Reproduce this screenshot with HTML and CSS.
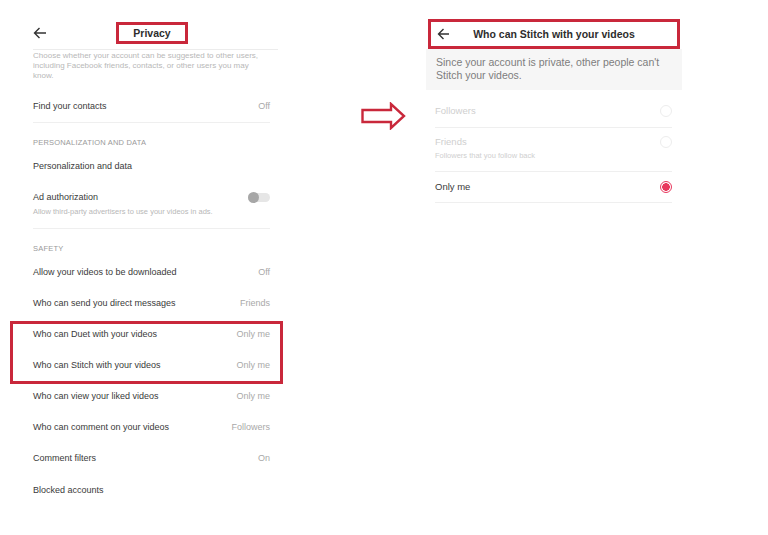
FILE: index.html
```html
<!DOCTYPE html>
<html lang="en">
<head>
    <meta charset="UTF-8">
    <meta name="viewport" content="width=device-width, initial-scale=1.0">
    <title>Privacy settings</title>
    <link rel="stylesheet" href="styles.css">
</head>
<body>
    <div class="page">
        <!-- Privacy list -->
        <div class="privacy">
            <div class="top-bar">
                <svg class="back" width="14" height="12" viewBox="0 0 14 12"><path d="M13 6H1.5M6.5 1L1.5 6l5 5" fill="none" stroke="#333" stroke-width="1.4"/></svg>
                <span class="title-mark">Privacy</span>
            </div>
            <p class="intro">Choose whether your account can be suggested to other users, including Facebook friends, contacts, or other users you may know.</p>

            <div class="row row-line"><span>Find your contacts</span><span class="value">Off</span></div>

            <div class="section">PERSONALIZATION AND DATA</div>
            <div class="row row-short"><span>Personalization and data</span></div>
            <div class="row-ad">
                <div>
                    <div class="ad-title">Ad authorization</div>
                    <div class="ad-sub">Allow third-party advertisers to use your videos in ads.</div>
                </div>
                <span class="toggle"><span class="knob"></span></span>
            </div>

            <div class="section section-safety">SAFETY</div>
            <div class="row"><span>Allow your videos to be downloaded</span><span class="value">Off</span></div>
            <div class="row"><span>Who can send you direct messages</span><span class="value">Friends</span></div>
            <div class="marked">
                <div class="row"><span>Who can Duet with your videos</span><span class="value">Only me</span></div>
                <div class="row"><span>Who can Stitch with your videos</span><span class="value">Only me</span></div>
            </div>
            <div class="row"><span>Who can view your liked videos</span><span class="value">Only me</span></div>
            <div class="row"><span>Who can comment on your videos</span><span class="value">Followers</span></div>
            <div class="row"><span>Comment filters</span><span class="value">On</span></div>
            <div class="row"><span>Blocked accounts</span></div>
        </div>

        <!-- pointer to the detail screen -->
        <svg class="pointer" width="45" height="28" viewBox="0 0 45 28">
            <polygon points="1.5,8 30,8 30,2 43,14 30,26 30,20 1.5,20" fill="#fff" stroke="#c9283b" stroke-width="2.4" stroke-linejoin="miter"/>
        </svg>

        <!-- Stitch detail -->
        <div class="stitch">
            <div class="stitch-bar">
                <svg class="back" width="13" height="12" viewBox="0 0 13 12"><path d="M12 6H1.5M6.5 1L1.5 6l5 5" fill="none" stroke="#333" stroke-width="1.4"/></svg>
                <span class="stitch-title">Who can Stitch with your videos</span>
                <span></span>
            </div>
            <div class="notice">Since your account is private, other people can't Stitch your videos.</div>
            <div class="options">
                <div class="option disabled">
                    <div class="opt-label">Followers</div>
                    <span class="radio"></span>
                </div>
                <div class="option disabled opt-friends">
                    <div>
                        <div class="opt-label">Friends</div>
                        <div class="opt-sub">Followers that you follow back</div>
                    </div>
                    <span class="radio"></span>
                </div>
                <div class="option">
                    <div class="opt-label">Only me</div>
                    <span class="radio checked"></span>
                </div>
            </div>
        </div>
    </div>
</body>
</html>
```

FILE: styles.css
```css
* {
    margin: 0;
    padding: 0;
    box-sizing: border-box;
}

body {
    font-family: "Liberation Sans", Arial, sans-serif;
    background: #fff;
    color: #3a3a3a;
}

.page {
    display: flex;
    align-items: flex-start;
    padding-left: 33px;
}

/* left screen */

.privacy {
    width: 237px;
}

.top-bar {
    display: flex;
    align-items: center;
    margin-right: -8px;
    padding: 22px 0 5px;
    border-bottom: 1px solid #ececec;
}

.back {
    display: block;
}

.title-mark {
    margin-left: 69px;
    width: 72px;
    height: 22px;
    border: 3px solid #c9283b;
    text-align: center;
    font-weight: bold;
    font-size: 10.5px;
    line-height: 16px;
    color: #2d2d2d;
}

.intro {
    padding-top: 1px;
    font-size: 8px;
    line-height: 10px;
    color: #b8b8b8;
    padding-right: 8px;
    margin-bottom: 9px;
}

.row {
    height: 31.15px;
    display: flex;
    align-items: center;
    justify-content: space-between;
    font-size: 9px;
    color: #3a3a3a;
}

.row-line {
    height: 33px;
    border-bottom: 1px solid #efefef;
}

.row-short {
    height: 30px;
}

.value {
    color: #a9a9a9;
}

.section {
    padding-top: 15px;
    font-size: 7.5px;
    line-height: 10px;
    letter-spacing: 0.2px;
    color: #9a9a9a;
    margin-bottom: 3px;
}

.section-safety {
    margin-bottom: 2px;
}

.row-ad {
    display: flex;
    justify-content: space-between;
    align-items: flex-start;
    padding: 9px 0 10px;
    border-bottom: 1px solid #efefef;
}

.ad-title {
    font-size: 9px;
    line-height: 14px;
}

.ad-sub {
    margin-top: 2px;
    font-size: 7.5px;
    line-height: 12px;
    color: #b8b8b8;
}

.toggle {
    margin-top: 3px;
    width: 22px;
    height: 9px;
    border-radius: 5px;
    background: #e6e6e6;
    display: flex;
    align-items: center;
}

.knob {
    width: 11px;
    height: 11px;
    border-radius: 50%;
    background: #a7a7a7;
}

.marked {
    position: relative;
}

.marked::before {
    content: "";
    position: absolute;
    top: 3px;
    bottom: -3px;
    left: -23px;
    right: -13px;
    border: 3px solid #c9283b;
}

/* arrow between screens */

.pointer {
    margin: 102px 0 0 91px;
    flex: none;
}

/* right screen */

.stitch {
    width: 256px;
    margin: 19px 0 0 20px;
}

.stitch-bar {
    margin: 0 2px;
    height: 30px;
    border: 3px solid #c9283b;
    padding: 0 6px;
    display: grid;
    grid-template-columns: 13px 1fr 13px;
    align-items: center;
}

.stitch-title {
    text-align: center;
    font-weight: bold;
    font-size: 10.5px;
    color: #2d2d2d;
}

.notice {
    padding: 7px 10px 8px;
    background: #f6f6f6;
    font-size: 10.5px;
    line-height: 13px;
    color: #7d7d7d;
}

.options {
    margin: 0 10px 0 9px;
}

.option {
    display: flex;
    justify-content: space-between;
    align-items: center;
    border-bottom: 1px solid #efefef;
    padding: 14px 0 9px;
}

.opt-friends {
    align-items: flex-start;
    padding: 7px 0 9px;
}

.option:last-child {
    padding: 8px 0;
}

.opt-label {
    font-size: 9.5px;
    line-height: 14px;
    color: #3a3a3a;
}

.opt-sub {
    margin-top: 1px;
    font-size: 7.5px;
    line-height: 12px;
    color: #cfcfcf;
}

.disabled .opt-label {
    color: #cfcfcf;
}

.radio {
    width: 12px;
    height: 12px;
    border-radius: 50%;
    border: 1px solid #ededed;
}

.opt-friends .radio {
    margin-top: 1px;
}

.radio.checked {
    border: 1.5px solid #e8395e;
    background: radial-gradient(circle, #e8395e 0 3.6px, #fff 4px);
}
```
